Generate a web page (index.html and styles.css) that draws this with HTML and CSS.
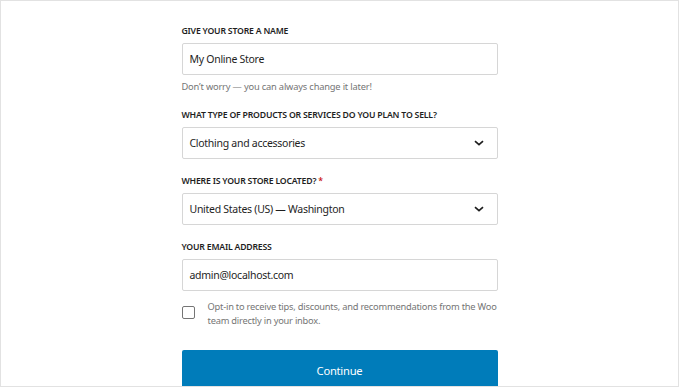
FILE: index.html
```html
<!DOCTYPE html>
<html>
<head>
<meta charset="utf-8">
<link rel="stylesheet" href="styles.css">
</head>
<body>
<div class="frame">
  <form class="form">
    <div class="field field-first">
      <label class="label">Give your store a name</label>
      <div class="input">My Online Store</div>
      <p class="help">Don’t worry — you can always change it later!</p>
    </div>
    <div class="field">
      <label class="label">What type of products or services do you plan to sell?</label>
      <div class="input select">
        <span>Clothing and accessories</span>
        <svg class="chev" width="12" height="8" viewBox="0 0 12 8"><path d="M2 2.2 6 5.6 10 2.2" fill="none" stroke="#1e1e1e" stroke-width="1.7"/></svg>
      </div>
    </div>
    <div class="field">
      <label class="label">Where is your store located? <span class="req">*</span></label>
      <div class="input select">
        <span>United States (US) — Washington</span>
        <svg class="chev" width="12" height="8" viewBox="0 0 12 8"><path d="M2 2.2 6 5.6 10 2.2" fill="none" stroke="#1e1e1e" stroke-width="1.7"/></svg>
      </div>
    </div>
    <div class="field">
      <label class="label">Your email address</label>
      <div class="input">admin@localhost.com</div>
    </div>
    <div class="optin">
      <span class="checkbox"></span>
      <span class="optin-text">Opt-in to receive tips, discounts, and recommendations from the Woo team directly in your inbox.</span>
    </div>
    <div class="button">Continue</div>
  </form>
</div>
</body>
</html>
```
FILE: styles.css
```css
html, body { margin: 0; padding: 0; background: #fff; }
body { font-family: "Noto Sans", "Open Sans", sans-serif; color: #1e1e1e; }
.frame {
  width: 677px;
  height: 385px;
  border: 1px solid #e2e2e2;
  overflow: hidden;
  background: #fff;
}
.form {
  width: 316px;
  margin: 0 auto;
  padding-top: 24px;
  display: flex;
  flex-direction: column;
}
.field { display: flex; flex-direction: column; margin-bottom: 16px; }
.field-first { margin-bottom: 15px; }
.label {
  font-size: 8.7px;
  letter-spacing: -0.2px;
  font-weight: 600;
  text-transform: uppercase;
  line-height: 12px;
  margin-bottom: 6px;
  color: #1e1e1e;
}
.req { color: #cc1818; }
.input {
  height: 30px;
  border: 1px solid #d6d6d6;
  border-radius: 2px;
  padding: 0 7px;
  display: flex;
  align-items: center;
  font-size: 10.5px;
  letter-spacing: -0.28px;
  color: #1e1e1e;
}
.select { justify-content: space-between; padding-right: 12px; }
.help {
  margin: 5px 0 0;
  font-size: 9.3px;
  letter-spacing: -0.18px;
  line-height: 14px;
  color: #757575;
}
.optin { display: flex; align-items: flex-start; margin-top: -7px; }
.checkbox {
  width: 11px; height: 11px;
  border: 1px solid #757575;
  border-radius: 2px;
  margin: 6px 13px 0 0;
  flex: none;
}
.optin-text {
  font-size: 9.3px;
  letter-spacing: -0.22px;
  line-height: 14px;
  color: #757575;
  margin-right: -4px;
}
.button {
  margin-top: 22px;
  height: 40px;
  flex: none;
  background: #007cba;
  border-radius: 2px;
  color: #fff;
  font-size: 11.2px;
  letter-spacing: -0.25px;
  display: flex;
  align-items: center;
  justify-content: center;
}
```
